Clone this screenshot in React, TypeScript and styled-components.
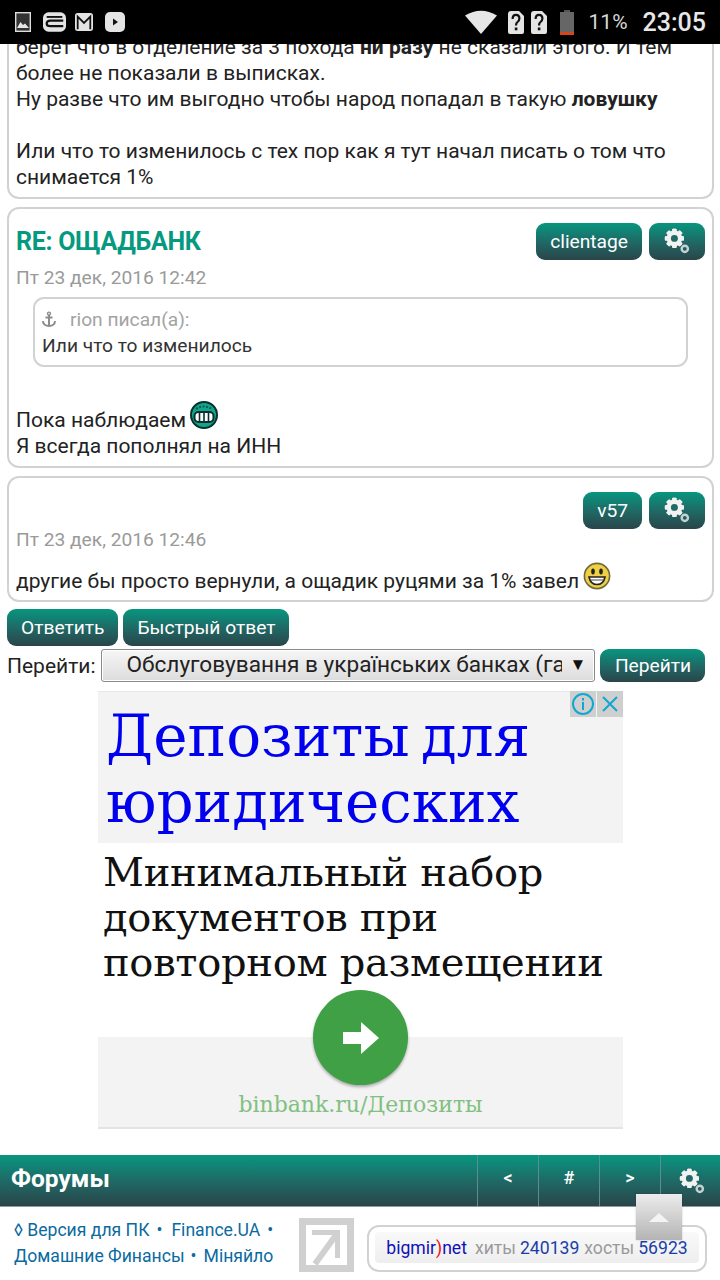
import React from "react";
import styled, { createGlobalStyle } from "styled-components";

const Global = createGlobalStyle`
  html, body { margin: 0; padding: 0; background: #fff; }
  body { font-family: Roboto, "Liberation Sans", sans-serif; color: #222; }
  * { box-sizing: border-box; }
`;

const GRADIENT = "linear-gradient(to bottom, #07967f 0%, #1f6a66 50%, #2a4549 100%)";

const Page = styled.div`
  position: relative;
  width: 720px;
  height: 1280px;
  overflow: hidden;
  background: #fff;
`;

const StatusBar = styled.div`
  height: 44px;
  background: #000;
  display: flex;
  align-items: center;
  padding: 0 14px 0 15px;
  color: #e4e4e4;
`;

const StatusLeft = styled.div`
  display: flex;
  align-items: center;
  gap: 11px;
  flex: 1;
`;

const StatusRight = styled.div`
  display: flex;
  align-items: center;
`;

const Percent = styled.span`
  font-size: 21px;
  margin-left: 15px;
  color: #d8d8d8;
`;

const Clock = styled.span`
  font-size: 25px;
  font-weight: 500;
  margin-left: 15px;
  color: #e8e8e8;
`;

const Posts = styled.div`
  display: flex;
  flex-direction: column;
  gap: 8px;
  padding: 0 6px 0 7px;
`;

const Post = styled.div`
  border: 2px solid #d2d2d2;
  border-radius: 12px;
  padding: 13px 7px 7px;
  font-size: 21px;
  line-height: 26px;
  color: #222;
`;

const ClippedPost = styled(Post)`
  height: 155px;
  padding: 0 7px 7px;
  border-top: 0;
  border-radius: 0 0 12px 12px;
  overflow: hidden;
  display: flex;
  flex-direction: column;
  justify-content: flex-end;
`;

const ShortPost = styled(Post)`
  padding-bottom: 6px;
`;

const Line = styled.div`
  flex-shrink: 0;
  white-space: nowrap;
`;

const SmileLine = styled(Line)`
  margin-top: 14px;
`;

const Gap = styled.div`
  flex-shrink: 0;
  height: 26px;
`;

const PostHead = styled.div`
  display: flex;
  align-items: center;
  height: 38px;
  gap: 7px;
`;

const Title = styled.h3`
  margin: 0 auto 0 0;
  padding-top: 1px;
  font-size: 25px;
  font-weight: 700;
  letter-spacing: -0.3px;
  color: #05997f;
`;

const Spacer = styled.div`
  flex: 1;
`;

const TealButton = styled.button`
  height: 37px;
  border: 0;
  border-radius: 9px;
  background: ${GRADIENT};
  color: #fff;
  font-family: inherit;
  font-size: 19.2px;
  padding: 0 14px;
  display: inline-flex;
  align-items: center;
  justify-content: center;
`;

const GearButton = styled(TealButton)`
  width: 56px;
  padding: 0 0 1px;
`;

const PostDate = styled.div<{ $top: number; $bottom: number }>`
  color: #9a9a9a;
  font-size: 19.2px;
  line-height: 26px;
  margin-top: ${(p) => p.$top}px;
  margin-bottom: ${(p) => p.$bottom}px;
`;

const Quote = styled.div`
  margin: 0 17px 0 17px;
  height: 70px;
  border: 2px solid #d2d2d2;
  border-radius: 11px;
  padding: 8px 7px 0;
  font-size: 19.2px;
  line-height: 26px;
  color: #333;
`;

const QuoteHead = styled.div`
  display: flex;
  align-items: center;
  color: #a3a3a3;
  gap: 14px;
`;

const Smile = styled.svg`
  vertical-align: -2px;
  margin: -9px 0 0 4px;
`;

const Actions = styled.div`
  display: flex;
  gap: 5px;
  padding: 7px 0 0 7px;
`;

const JumpRow = styled.div`
  display: flex;
  align-items: center;
  padding: 3px 0 0 7px;
  font-size: 21px;
  height: 36px;
`;

const FakeSelect = styled.div`
  margin-left: 6px;
  width: 494px;
  height: 33px;
  border: 1px solid #8a8a8a;
  border-radius: 3px;
  background: linear-gradient(to bottom, #f6f6f6, #dcdcdc);
  box-shadow: inset 0 0 0 1px #fff;
  display: flex;
  align-items: center;
  padding: 0 0 2px 24px;
  font-size: 22.6px;
  color: #222;
`;

const SelectText = styled.span`
  width: 436px;
  overflow: hidden;
  white-space: nowrap;
`;

const SelectArrow = styled.span`
  margin-left: 7px;
  font-size: 17px;
  color: #111;
`;

const JumpButton = styled(TealButton)`
  margin-left: 5px;
  width: 105px;
  height: 33px;
  padding: 0;
`;

const Ad = styled.div`
  position: relative;
  width: 525px;
  height: 438px;
  margin: 9px 0 0 98px;
  font-family: "DejaVu Serif", "Liberation Serif", serif;
  border-bottom: 2px solid #e4e4e4;
  background: linear-gradient(to bottom, #fff 0, #fff 346px, #f3f3f3 346px);
`;

const AdHead = styled.div`
  height: 152px;
  background: #f3f3f3;
  border-top: 1px solid #e8e8e8;
  padding: 11px 0 0 8px;
  font-size: 58px;
  line-height: 66px;
  color: #0000ee;
  word-spacing: -7px;
  white-space: nowrap;
`;

const AdBody = styled.div`
  padding: 7px 0 0 5px;
  font-size: 40px;
  line-height: 45px;
  color: #111;
  white-space: nowrap;
  letter-spacing: -0.3px;
`;

const AdBadges = styled.div`
  position: absolute;
  top: 0;
  right: 0;
  display: flex;
  gap: 1px;
`;

const AdBadge = styled.div`
  width: 26px;
  height: 26px;
  background: #cfcfcf;
  display: flex;
  align-items: center;
  justify-content: center;
`;

const AdCircle = styled.div`
  width: 95px;
  height: 95px;
  margin: 5px auto 0;
  border-radius: 50%;
  background: #3fa045;
  box-shadow: 0 2px 3px rgba(0, 0, 0, 0.3);
  display: flex;
  align-items: center;
  justify-content: center;
`;

const AdLink = styled.div`
  text-align: center;
  font-size: 22px;
  line-height: 34px;
  margin-top: 3px;
  color: #81c081;
`;

const ForumBar = styled.div`
  height: 52px;
  margin-top: 26px;
  background: ${GRADIENT};
  border-bottom: 1px solid #8a9c9c;
  display: flex;
  align-items: stretch;
`;

const ForumTitle = styled.div`
  flex: 1;
  display: flex;
  align-items: center;
  padding: 0 0 4px 11px;
  color: #fff;
  font-size: 24.5px;
  font-weight: 700;
`;

const ForumCell = styled.div`
  width: 61px;
  border-left: 1px solid #5a8f8c;
  display: flex;
  align-items: center;
  justify-content: center;
  padding-bottom: 6px;
  color: #fff;
  font-size: 18px;
  font-weight: 500;
`;

const ForumGearCell = styled(ForumCell)`
  width: 60px;
  padding: 0 0 0 3px;
`;

const Footer = styled.div`
  display: flex;
  align-items: flex-start;
  padding: 11px 0 0 14px;
`;

const FooterLinks = styled.div`
  width: 285px;
  margin-top: -1px;
  font-size: 17.6px;
  line-height: 26px;
  color: #0a6a9f;
  white-space: nowrap;
`;

const Bullet = styled.span<{ $tight?: boolean }>`
  margin: ${(p) => (p.$tight ? "0 7px 0 6px" : "0 9px 0 7px")};
`;

const Logo = styled.svg`
  margin: 0;
`;

const Counter = styled.div`
  margin: 7px 0 0 13px;
  width: 340px;
  height: 47px;
  border: 2px solid #d2d2d2;
  border-radius: 12px;
  padding: 5px 6px;
`;

const CounterInner = styled.div`
  height: 31px;
  border-radius: 4px;
  padding-left: 5px;
  background: linear-gradient(to bottom, #f9f9f9, #eeeeee);
  display: flex;
  align-items: center;
  justify-content: center;
  font-size: 17.6px;
  white-space: nowrap;
`;

const Brand = styled.span`
  color: #1010b8;
  margin-right: 8px;
`;

const Paren = styled.span`
  color: #f01010;
`;

const Muted = styled.span`
  color: #9a9a9a;
  margin-right: 4px;
`;

const Num = styled.span`
  color: #1a3fa8;
  margin-right: 5px;
`;

const ToTop = styled.div`
  position: absolute;
  left: 636px;
  top: 1194px;
  width: 46px;
  height: 46px;
  background: linear-gradient(to bottom, #ececec, #b4b4b4);
  box-shadow: 0 0 2px rgba(0, 0, 0, 0.2);
  display: flex;
  align-items: center;
  justify-content: center;
`;

const Gear = ({ size = 26 }: { size?: number }) => {
  const teeth = [0, 45, 90, 135, 180, 225, 270, 315];
  return (
    <svg width={size} height={size} viewBox="0 0 30 30">
      <g fill="#f2f2f2">
        {teeth.map((a) => (
          <rect key={a} x="9.5" y="1" width="5" height="22" rx="1" transform={`rotate(${a} 12 12)`} />
        ))}
      </g>
      <circle cx="12" cy="12" r="7.2" fill="none" stroke="#f2f2f2" strokeWidth="3.6" />
      <circle cx="12" cy="12" r="4" fill="#1f6a66" />
      <circle cx="24" cy="24" r="3.6" fill="none" stroke="#c4d2d2" strokeWidth="2.8" />
    </svg>
  );
};

const GreenGrin = () => (
  <Smile width="28" height="28" viewBox="0 0 28 28">
    <circle cx="14" cy="14" r="13" fill="#12a58c" stroke="#08302c" strokeWidth="2" />
    <path d="M6 8 Q14 3 22 8" fill="none" stroke="#0a5c50" strokeWidth="2" strokeDasharray="2 1.5" />
    <rect x="4.5" y="11" width="19" height="10" rx="4" fill="#fff" stroke="#08302c" strokeWidth="2" />
    <path d="M9.5 11v10M14 11v10M18.5 11v10" stroke="#08302c" strokeWidth="1.6" />
  </Smile>
);

const YellowSmile = () => (
  <Smile width="28" height="28" viewBox="0 0 28 28">
    <circle cx="14" cy="14" r="12.6" fill="#eecf45" stroke="#6f6a3c" strokeWidth="1.6" />
    <ellipse cx="10" cy="9.5" rx="1.8" ry="3" fill="#222" />
    <ellipse cx="18" cy="9.5" rx="1.8" ry="3" fill="#222" />
    <path d="M6 15 H22 Q20.5 22.5 14 22.5 Q7.5 22.5 6 15 Z" fill="#fff" stroke="#222" strokeWidth="1.6" />
    <path d="M6.5 18 H21.5" stroke="#444" strokeWidth="1" />
  </Smile>
);

const Anchor = () => (
  <svg width="14" height="18" viewBox="0 0 14 18" fill="none" stroke="#8c8c8c" strokeWidth="2">
    <circle cx="7" cy="2.6" r="1.5" strokeWidth="1.4" />
    <path d="M7 4v11M3.5 6.5h7M1 10c0 3.5 3 5 6 5s6-1.5 6-5" />
  </svg>
);

const StatusIcons = () => (
  <StatusLeft>
    <svg width="16" height="20" viewBox="0 0 16 20" fill="none">
      <rect x="0.7" y="0.7" width="14.6" height="18.6" fill="#333" stroke="#ddd" strokeWidth="1.4" />
      <path d="M2 16 L5.5 10 L8 13 L10 11.5 L14 16 Z" fill="#e6e6e6" />
    </svg>
    <svg width="23" height="20" viewBox="0 0 25 21" fill="none" style={{ marginLeft: 1 }}>
      <rect x="0" y="0" width="25" height="21" rx="6" fill="#e4e4e4" />
      <path d="M4 5 H21" stroke="#111" strokeWidth="2" />
      <path d="M22 9 H8 Q4 9 4 12 Q4 15 8 15 H22" stroke="#111" strokeWidth="2.4" />
    </svg>
    <svg width="18" height="20" viewBox="0 0 20 20" fill="none" style={{ marginLeft: -2 }}>
      <rect width="20" height="20" rx="3" fill="#e4e4e4" />
      <path d="M3 18V4L10 11L17 4V18" stroke="#111" strokeWidth="2" />
    </svg>
    <svg width="20" height="20" viewBox="0 0 20 20" style={{ marginLeft: 1 }}>
      <rect width="20" height="20" rx="5" fill="#e4e4e4" />
      <path d="M8 6.5 L13 10 L8 13.5 Z" fill="#111" />
    </svg>
  </StatusLeft>
);

const StatusIndicators = () => (
  <StatusRight>
    <svg width="32" height="24" viewBox="0 0 32 24">
      <path d="M0 5.5 Q16 -4 32 5.5 L16 24 Z" fill="#e6e6e6" />
    </svg>
    {[0, 1].map((i) => (
      <svg key={i} width="16" height="23" viewBox="0 0 16 23" style={{ marginLeft: i ? 7 : 11 }}>
        <path d="M3 0H11L16 5V21Q16 23 14 23H2Q0 23 0 21V3Q0 0 3 0Z" fill="#e4e4e4" />
        <path d="M4.6 8 Q4.6 3.8 8 3.8 Q11.4 3.8 11.4 7.5 Q11.4 9.5 9.5 11 Q8 12.2 8 14.5" fill="none" stroke="#111" strokeWidth="2.2" />
        <rect x="6.8" y="16.5" width="2.6" height="2.8" fill="#111" />
      </svg>
    ))}
    <svg width="14" height="25" viewBox="0 0 14 25" style={{ marginLeft: 13 }}>
      <rect x="4" y="0" width="6" height="2" fill="#555" />
      <rect x="0" y="2" width="14" height="20" fill="#666" />
      <rect x="0" y="22" width="14" height="3" fill="#d5451f" />
    </svg>
    <Percent>11%</Percent>
    <Clock>23:05</Clock>
  </StatusRight>
);

export default function App() {
  return (
    <>
      <Global />
      <Page>
        <StatusBar>
          <StatusIcons />
          <StatusIndicators />
        </StatusBar>

        <Posts>
          <ClippedPost>
            <Line>
              берет что в отделение за 3 похода <b>ни разу</b> не сказали этого. И тем
            </Line>
            <Line>более не показали в выписках.</Line>
            <Line>
              Ну разве что им выгодно чтобы народ попадал в такую <b>ловушку</b>
            </Line>
            <Gap />
            <Line>Или что то изменилось с тех пор как я тут начал писать о том что</Line>
            <Line>снимается 1%</Line>
          </ClippedPost>

          <Post>
            <PostHead>
              <Title>RE: ОЩАДБАНК</Title>
              <TealButton>clientage</TealButton>
              <GearButton>
                <Gear />
              </GearButton>
            </PostHead>
            <PostDate $top={5} $bottom={6}>
              Пт 23 дек, 2016 12:42
            </PostDate>
            <Quote>
              <QuoteHead>
                <Anchor />
                <span>rion писал(а):</span>
              </QuoteHead>
              <div>Или что то изменилось</div>
            </Quote>
            <Gap />
            <SmileLine>
              Пока наблюдаем
              <GreenGrin />
            </SmileLine>
            <Line>Я всегда пополнял на ИНН</Line>
          </Post>

          <ShortPost>
            <PostHead>
              <Spacer />
              <TealButton>v57</TealButton>
              <GearButton>
                <Gear />
              </GearButton>
            </PostHead>
            <PostDate $top={-2} $bottom={15}>
              Пт 23 дек, 2016 12:46
            </PostDate>
            <Line>
              другие бы просто вернули, а ощадик руцями за 1% завел
              <YellowSmile />
            </Line>
          </ShortPost>
        </Posts>

        <Actions>
          <TealButton>Ответить</TealButton>
          <TealButton>Быстрый ответ</TealButton>
        </Actions>

        <JumpRow>
          Перейти:
          <FakeSelect>
            <SelectText>Обслуговування в українських банках (гаранти</SelectText>
            <SelectArrow>▼</SelectArrow>
          </FakeSelect>
          <JumpButton>Перейти</JumpButton>
        </JumpRow>

        <Ad>
          <AdHead>
            Депозиты для
            <br />
            юридических
          </AdHead>
          <AdBody>
            Минимальный набор
            <br />
            документов при
            <br />
            повторном размещении
          </AdBody>
          <AdCircle>
            <svg width="36" height="32" viewBox="0 0 36 32">
              <path d="M0 10H18V0L36 16L18 32V22H0Z" fill="#fff" />
            </svg>
          </AdCircle>
          <AdLink>binbank.ru/Депозиты</AdLink>
          <AdBadges>
            <AdBadge>
              <svg width="24" height="24" viewBox="0 0 24 24" fill="none" stroke="#10a8d0" strokeWidth="2">
                <circle cx="12" cy="12" r="10" />
                <path d="M12 10v8M12 6v2.4" />
              </svg>
            </AdBadge>
            <AdBadge>
              <svg width="20" height="20" viewBox="0 0 20 20" fill="none" stroke="#10a8d0" strokeWidth="2">
                <path d="M3 3L17 17M17 3L3 17" />
              </svg>
            </AdBadge>
          </AdBadges>
        </Ad>

        <ForumBar>
          <ForumTitle>Форумы</ForumTitle>
          <ForumCell>&lt;</ForumCell>
          <ForumCell>#</ForumCell>
          <ForumCell>&gt;</ForumCell>
          <ForumGearCell>
            <Gear />
          </ForumGearCell>
        </ForumBar>

        <Footer>
          <FooterLinks>
            ◊ Версия для ПК
            <Bullet>•</Bullet>
            Finance.UA
            <Bullet>•</Bullet>
            <br />
            Домашние Финансы
            <Bullet $tight>•</Bullet>
            Міняйло
          </FooterLinks>
          <Logo width="55" height="54" viewBox="0 0 55 54" fill="none" stroke="#d0d0d0">
            <rect x="3.5" y="3.5" width="48" height="47" strokeWidth="7" />
            <path d="M16 46L37 17" strokeWidth="6" />
            <path d="M13 14.5H38.5V40" strokeWidth="5" />
          </Logo>
          <Counter>
            <CounterInner>
              <Brand>
                bigmir<Paren>)</Paren>net
              </Brand>
              <Muted>хиты</Muted>
              <Num>240139</Num>
              <Muted>хосты</Muted>
              <Num>56923</Num>
            </CounterInner>
          </Counter>
        </Footer>

        <ToTop>
          <svg width="20" height="9" viewBox="0 0 20 9">
            <path d="M0 9L10 0L20 9Z" fill="#f4f4f4" />
          </svg>
        </ToTop>
      </Page>
    </>
  );
}
